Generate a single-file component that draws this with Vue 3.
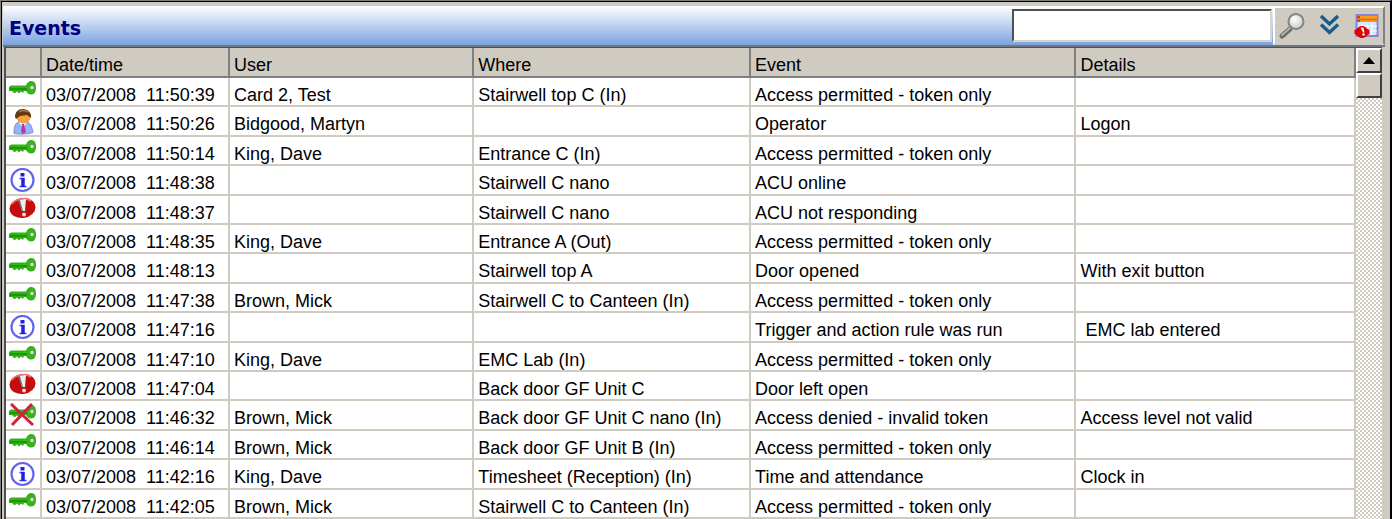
<template>
  <div class="window">
    <div class="panel">
      <header class="title-bar">
        <h1 class="title">Events</h1>
        <input v-model="search" class="search" type="text" aria-label="Search events" />
        <div class="tools">
          <button class="tool" type="button" aria-label="Find" @click="applySearch">
            <svg viewBox="0 0 28 28" width="28" height="28">
              <defs>
                <radialGradient id="lens" cx="0.4" cy="0.35" r="0.7">
                  <stop offset="0" stop-color="#fff" />
                  <stop offset="1" stop-color="#c9c9c9" />
                </radialGradient>
              </defs>
              <path d="M12 17 4 24" stroke="#6c6c6c" stroke-width="5" stroke-linecap="round" />
              <path d="M12 16 4 23" stroke="#b0b0b0" stroke-width="2" stroke-linecap="round" />
              <circle cx="18" cy="9.500" r="7.500" fill="url(#lens)" stroke="#858585" stroke-width="2" />
            </svg>
          </button>
          <button class="tool" type="button" aria-label="Expand" @click="clearSearch">
            <svg viewBox="0 0 28 28" width="28" height="28" fill="none" stroke="#165f8c" stroke-width="3.4">
              <path d="M6 4 14.500 12 23 4" />
              <path d="M6 12.500 14.500 20.500 23 12.500" />
            </svg>
          </button>
          <button class="tool" type="button" aria-label="Event alarms">
            <svg viewBox="0 0 28 28" width="28" height="28">
              <rect x="4.500" y="3" width="21" height="21" fill="#cfe6fb" stroke="#8484d8" stroke-width="2" />
              <path d="M10 11v12M15 11v12M20 11v12M6 14h19M6 19h19" stroke="#fff" />
              <path d="M5 4h20v6H5z" fill="#ff9a1c" />
              <path d="M8 7.500h17" stroke="#e66a00" stroke-width="1.500" />
              <path d="M5 4h3v2.500H5zM5 7.500h3v2.500H5z" fill="#e83c00" />
              <path d="M6 15.500 8.500 14h3l2.500 1.500 1.500 1.500 2 1v4l-2 1-1.500 1.500-2.500 1.500h-3L6 24.500 4.500 23l-2-1v-4l2-1z" fill="#e00000" />
              <path d="M8.500 15.500h3l1 5h-1.500z" fill="#fff" />
              <circle cx="11.500" cy="22.500" r="1.200" fill="#fff" />
            </svg>
          </button>
        </div>
      </header>

      <div class="list">
        <table class="events">
          <colgroup>
            <col class="col-icon" />
            <col class="col-date" />
            <col class="col-user" />
            <col class="col-where" />
            <col class="col-event" />
            <col />
          </colgroup>
          <thead>
            <tr>
              <th aria-label="Type"></th>
              <th>Date/time</th>
              <th>User</th>
              <th>Where</th>
              <th>Event</th>
              <th>Details</th>
            </tr>
          </thead>
          <tbody>
            <tr v-for="row in visibleEvents" :key="row.time">
              <td class="icon">
                <!-- Access granted / denied key -->
                <svg v-if="row.type === 'key' || row.type === 'denied'" viewBox="0 0 28 26" width="28" height="26">
                  <path d="M1 8 3 6.500h15c1-3 3-4.500 5-4.500 4 0 5 3 5 6.500s-1 7-5 7c-3 0-4-2-5-3.500h-2l-1 2-2-1.500-2 2-2-2-2 1.500H6L4 12H1z" fill="#37ad1c" />
                  <path d="M2 8h17c1-3 2-4.500 4-4.500 3 0 4 2 4 5s-1 5.500-4 5.500c-2 0-3-1-4-3H2z" fill="#2cbd0b" />
                  <path d="M2 10h17" stroke="#168a05" stroke-width="1.500" />
                  <circle cx="24" cy="8.500" r="2.400" fill="#d4edc9" stroke="#55a046" stroke-width="1.500" />
                  <path v-if="row.type === 'denied'" d="M3 1 25 22M24 1 4 22" stroke="#d4203c" stroke-width="3" />
                </svg>
                <!-- Operator -->
                <svg v-else-if="row.type === 'operator'" viewBox="0 0 28 26" width="28" height="26">
                  <path d="M6 24.500c0-7 1-10 5-12h8c4 2 5 6 6 11-5 2-14 2-19 1z" fill="#9ab4f8" stroke="#7a8ed6" />
                  <path d="M11 13h8l-4 6z" fill="#fff" />
                  <path d="m14 15 2 0 2 8-3 2-2-2z" fill="#b33ba7" />
                  <ellipse cx="15.500" cy="8" rx="7" ry="6.500" fill="#f4a23d" />
                  <path d="M7 8C7 3 10 0 15 0s9 4 8 9l-4-3-7 1-4 3z" fill="#64380d" />
                  <path d="M11 3c3-2 6-2 9 0" stroke="#b58147" stroke-width="1.500" fill="none" />
                </svg>
                <!-- Information -->
                <svg v-else-if="row.type === 'info'" viewBox="0 0 28 26" width="28" height="26">
                  <circle cx="14.500" cy="12" r="11" fill="#fff" stroke="#6464ea" stroke-width="2.200" />
                  <path d="M14.500 5v3.500" stroke="#2020e0" stroke-width="4" />
                  <path d="M11.500 10.500h5M11.500 18.500h7" stroke="#4040e4" stroke-width="1.500" />
                  <path d="M15 10v9" stroke="#2020e0" stroke-width="3.500" />
                </svg>
                <!-- Alarm -->
                <svg v-else viewBox="0 0 28 26" width="28" height="26">
                  <ellipse cx="14.500" cy="11" rx="13" ry="10" fill="#c60d0d" transform="rotate(-8 14.500 11)" />
                  <path d="M4 7c3-5 14-7 19-3" stroke="#ef7068" stroke-width="2" fill="none" />
                  <path d="m11 3 7-1-1 12h-3z" fill="#eef0f0" />
                  <path d="m10 3 4 11h1L12 3z" fill="#777" />
                  <circle cx="16" cy="17.500" r="2" fill="#ddd" />
                </svg>
              </td>
              <td class="time">{{ row.time }}</td>
              <td>{{ row.user }}</td>
              <td>{{ row.where }}</td>
              <td>{{ row.event }}</td>
              <td :class="{ indent: row.indent }">{{ row.details }}</td>
            </tr>
          </tbody>
        </table>

        <div class="scrollbar">
          <button class="scroll-up" type="button" aria-label="Scroll up">
            <svg viewBox="0 0 12 7" width="12" height="7"><path d="M6 0 12 7H0z" fill="#000" /></svg>
          </button>
          <div class="thumb"></div>
        </div>
      </div>
    </div>
  </div>
</template>

<script setup>
import { computed, ref } from 'vue'

const search = ref('')
const filter = ref('')

const events = [
  { type: 'key', time: '03/07/2008  11:50:39', user: 'Card 2, Test', where: 'Stairwell top C (In)', event: 'Access permitted - token only' },
  { type: 'operator', time: '03/07/2008  11:50:26', user: 'Bidgood, Martyn', where: '', event: 'Operator', details: 'Logon' },
  { type: 'key', time: '03/07/2008  11:50:14', user: 'King, Dave', where: 'Entrance C (In)', event: 'Access permitted - token only' },
  { type: 'info', time: '03/07/2008  11:48:38', user: '', where: 'Stairwell C nano', event: 'ACU online' },
  { type: 'alarm', time: '03/07/2008  11:48:37', user: '', where: 'Stairwell C nano', event: 'ACU not responding' },
  { type: 'key', time: '03/07/2008  11:48:35', user: 'King, Dave', where: 'Entrance A (Out)', event: 'Access permitted - token only' },
  { type: 'key', time: '03/07/2008  11:48:13', user: '', where: 'Stairwell top A', event: 'Door opened', details: 'With exit button' },
  { type: 'key', time: '03/07/2008  11:47:38', user: 'Brown, Mick', where: 'Stairwell C to Canteen (In)', event: 'Access permitted - token only' },
  { type: 'info', time: '03/07/2008  11:47:16', user: '', where: '', event: 'Trigger and action rule was run', details: 'EMC lab entered', indent: true },
  { type: 'key', time: '03/07/2008  11:47:10', user: 'King, Dave', where: 'EMC Lab (In)', event: 'Access permitted - token only' },
  { type: 'alarm', time: '03/07/2008  11:47:04', user: '', where: 'Back door GF Unit C', event: 'Door left open' },
  { type: 'denied', time: '03/07/2008  11:46:32', user: 'Brown, Mick', where: 'Back door GF Unit C nano (In)', event: 'Access denied - invalid token', details: 'Access level not valid' },
  { type: 'key', time: '03/07/2008  11:46:14', user: 'Brown, Mick', where: 'Back door GF Unit B (In)', event: 'Access permitted - token only' },
  { type: 'info', time: '03/07/2008  11:42:16', user: 'King, Dave', where: 'Timesheet (Reception) (In)', event: 'Time and attendance', details: 'Clock in' },
  { type: 'key', time: '03/07/2008  11:42:05', user: 'Brown, Mick', where: 'Stairwell C to Canteen (In)', event: 'Access permitted - token only' }
]

const visibleEvents = computed(() => {
  const q = filter.value.toLowerCase()
  return events.filter(e => [e.user, e.where, e.event, e.details].join(' ').toLowerCase().includes(q))
})

function applySearch() { filter.value = search.value.trim() }
function clearSearch() { search.value = ''; filter.value = '' }
</script>

<style>
body { background: #d0cbc0; overflow: hidden; }
</style>

<style scoped>
.window {
  box-sizing: border-box;
  min-height: 100vh;
  border: solid #808080;
  border-width: 1px 2px 0 1px;
  border-right-color: #000;
  padding: 5px 5px 0 2px;
  background: #d0cbc0;
  box-shadow: inset 1px 1px 0 #000;
  font-family: "Liberation Sans", Arial, sans-serif;
  font-size: 18px;
  color: #000;
}

.title-bar {
  display: flex;
  align-items: center;
  height: 39px;
  border-bottom: 2px solid #6f7580;
  background: linear-gradient(#fff, #7ba3df);
}

.title {
  flex: 1;
  margin: 0;
  padding: 4px 0 0 6px;
  font-family: "DejaVu Sans", Verdana, sans-serif;
  font-size: 19px;
  font-weight: bold;
  color: #000080;
}

.search {
  box-sizing: border-box;
  width: 260px;
  height: 33px;
  padding: 0 4px;
  border: 2px solid;
  border-color: #505050 #d8d4cc #d8d4cc #505050;
  background: #fff;
  font: inherit;
}

.tools {
  box-sizing: border-box;
  display: flex;
  align-items: center;
  gap: 9px;
  align-self: stretch;
  margin-left: 1px;
  padding: 0 3px;
  border: 2px solid;
  border-color: #fff #808080 #d0cbc0 #fff;
  background: #d0cbc0;
}

.tool {
  display: flex;
  padding: 0;
  border: none;
  background: none;
}

.list {
  display: flex;
  margin: 0 3px 0 1px;
  border: 2px solid #505050;
  border-width: 1px 0 0 2px;
  background: #fff;
}

.events {
  flex: 1;
  min-width: 0;
  table-layout: fixed;
  border-collapse: separate;
  border-spacing: 0;
}

.col-icon { width: 36px; }
.col-date { width: 188px; }
.col-user { width: 18.1%; }
.col-where { width: 20.5%; }
.col-event { width: 24.1%; }

th, td {
  box-sizing: border-box;
  padding: 6px 0 0 4px;
  border: solid #d0cbc0;
  border-width: 0 2px 2px 0;
  line-height: 20px;
  white-space: nowrap;
  overflow: hidden;
  text-align: left;
}

th {
  height: 30px;
  border-color: #808080;
  background: #d0cbc0;
  font-weight: normal;
}

td { height: 29px; }
tr:nth-child(5n + 2) td, tr:nth-child(5n + 4) td { height: 30px; }

.time { white-space: pre; }
.icon { padding: 1px 0 0 2px; }
.icon svg { display: block; }
.indent { padding-left: 9px; }

.scrollbar {
  width: 26px;
  background: repeating-conic-gradient(#d0cbc0 0 25%, #fff 0 50%) 0 0 / 4px 4px;
}

.scroll-up, .thumb {
  box-sizing: border-box;
  display: flex;
  align-items: center;
  justify-content: center;
  width: 100%;
  height: 25px;
  padding: 0;
  border: 2px solid;
  border-color: #fff #404040 #404040 #fff;
  border-radius: 0;
  background: #d0cbc0;
}
</style>
